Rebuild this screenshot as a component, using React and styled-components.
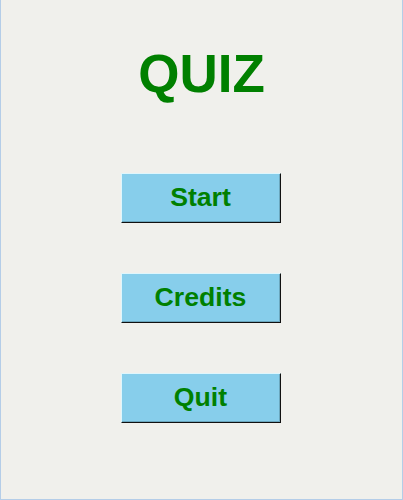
import React from "react";
import styled, { createGlobalStyle } from "styled-components";

const GlobalStyle = createGlobalStyle`
  html, body {
    margin: 0;
    padding: 0;
  }
  body {
    font-family: "Liberation Sans", Arial, sans-serif;
    background: #f0f0ec;
  }
`;

const Window = styled.div`
  box-sizing: border-box;
  width: 403px;
  height: 500px;
  background: #f0f0ec;
  border: 1px solid #b4cde8;
  border-top: none;
  display: flex;
  flex-direction: column;
  align-items: center;
  padding-top: 43px;
`;

const Title = styled.h1`
  margin: 0;
  font-family: "Liberation Sans", Arial, sans-serif;
  font-size: 53px;
  font-weight: bold;
  line-height: normal;
  color: #008000;
`;

const Menu = styled.div`
  display: flex;
  flex-direction: column;
  align-items: center;
  gap: 50px;
  margin-top: 69px;
  margin-right: 2px;
`;

const MenuButton = styled.button`
  box-sizing: border-box;
  width: 160px;
  height: 50px;
  padding: 0 0 1px;
  background: #87ceeb;
  border-style: solid;
  border-width: 1px;
  border-color: #dff6fc #111 #111 #dff6fc;
  box-shadow: inset -1px -1px 0 #6aa6bd;
  font-family: "Liberation Sans", Arial, sans-serif;
  font-size: 26.67px;
  font-weight: bold;
  color: #008000;
  display: flex;
  align-items: center;
  justify-content: center;
  cursor: pointer;
`;

export default function App() {
  return (
    <>
      <GlobalStyle />
      <Window>
        <Title>QUIZ</Title>
        <Menu>
          <MenuButton>Start</MenuButton>
          <MenuButton>Credits</MenuButton>
          <MenuButton>Quit</MenuButton>
        </Menu>
      </Window>
    </>
  );
}
